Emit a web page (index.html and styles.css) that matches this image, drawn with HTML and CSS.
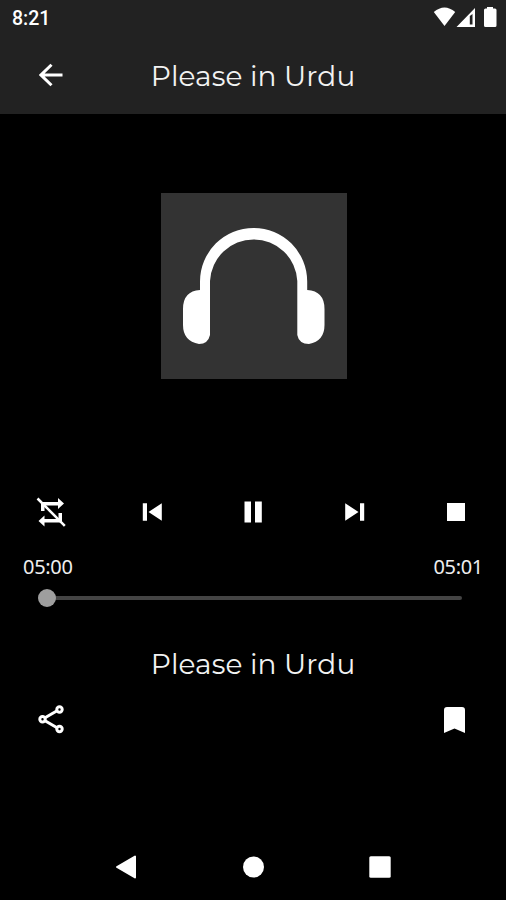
FILE: index.html
```html
<!DOCTYPE html>
<html lang="en">
  <head>
    <meta charset="utf-8">
    <title>Please in Urdu</title>
    <link rel="stylesheet" href="styles.css">
  </head>

  <body>
    <header>
      <div class="status">
        <span class="clock">8:21</span>
        <svg class="statusIcons" width="64" height="22" viewBox="0 0 64 22">
          <path d="M0.800 6 Q11.500 -3 22.200 6 L11.500 20 Z"/>
          <path fill-rule="evenodd" d="M42 2 V21 H23.500 Z M36.800 10 V18.500 H39.500 V8 Z"/>
          <path d="M54 1 H60 V2.500 H62 Q63.500 2.500 63.500 4 V19.500 Q63.500 21 62 21 H52.500 Q51 21 51 19.500 V4 Q51 2.500 52.500 2.500 H54 Z"/>
        </svg>
      </div>
      <div class="titleBar">
        <svg class="back" width="24" height="24" viewBox="0 0 24 24">
          <path d="M23.500 12 H2 M12.500 1.700 L2 12 L12.500 22.300"/>
        </svg>
        <h1>Please in Urdu</h1>
      </div>
    </header>

    <main>
      <div class="cover">
        <svg width="186" height="186" viewBox="0 0 186 186">
          <path d="M39 97 V88.500 A53.600 53.600 0 0 1 146.200 88.500 V97 Q163.500 98 163.500 116 V132 Q163.500 148 148 151 Q138 151 136.300 142 V88 A43.700 43.700 0 0 0 49 88 V142 Q47 151 38 151 Q22 148 22 132 V116 Q22 98 39 97 Z"/>
        </svg>
      </div>

      <div class="controls">
        <svg width="30" height="30" viewBox="0 0 30 30">
          <path d="M5 5 H22 V1 L28 6.500 L22 12 V8.500 H8.500 V14 H5 Z"/>
          <path d="M26 16 V25.500 H8.500 V29.500 L2.500 24 L8.500 18.500 V22 H22.500 V16 Z"/>
          <path class="slash" d="M1.500 1.500 L28.800 28.800"/>
        </svg>
        <svg width="20" height="20" viewBox="0 0 20 20">
          <path d="M0.800 1.200 H5 V18.800 H0.800 Z M19.800 1.200 V18.800 L6.500 10 Z"/>
        </svg>
        <svg width="18" height="22" viewBox="0 0 18 22">
          <path d="M0.500 0.500 H7 V21.500 H0.500 Z M11 0.500 H17.800 V21.500 H11 Z"/>
        </svg>
        <svg width="20" height="20" viewBox="0 0 20 20">
          <path d="M0.200 1.200 V18.800 L13.500 10 Z M15 1.200 H19.200 V18.800 H15 Z"/>
        </svg>
        <svg width="18" height="18" viewBox="0 0 18 18">
          <path d="M0 0 H18 V18 H0 Z"/>
        </svg>
      </div>

      <div class="times">
        <span>05:00</span>
        <span>05:01</span>
      </div>
      <div class="seek">
        <div class="thumb"></div>
      </div>

      <h2>Please in Urdu</h2>

      <div class="actions">
        <svg class="share" width="28" height="30" viewBox="0 0 28 30">
          <path d="M22.200 5.500 L5.500 15.200 L22.200 25"/>
          <circle cx="22.500" cy="5.500" r="2.700"/>
          <circle cx="5.500" cy="15.200" r="2.700"/>
          <circle cx="22.500" cy="25" r="2.700"/>
        </svg>
        <svg width="21" height="27" viewBox="0 0 21 27">
          <path d="M0 27 V4 Q0 1 3 1 H18 Q21 1 21 4 V27 L10.500 22.500 Z"/>
        </svg>
      </div>
    </main>

    <nav>
      <svg width="22" height="24" viewBox="0 0 22 24">
        <path class="rounded" d="M20 1.500 V22.500 L2 12 Z"/>
      </svg>
      <svg width="22" height="22" viewBox="0 0 22 22">
        <circle cx="11.500" cy="11" r="10.500"/>
      </svg>
      <svg width="22" height="22" viewBox="0 0 22 22">
        <rect x="0.300" y="0.300" width="21.400" height="21.400" rx="1.500"/>
      </svg>
    </nav>
  </body>
</html>
```

FILE: styles.css
```css
* {
  box-sizing: border-box;
}

body {
  display: flex;
  flex-direction: column;
  height: 900px;
  margin: 0;
  background-color: #000;
  color: #fff;
  font-family: "Noto Sans", sans-serif;
}

svg {
  display: block;
  fill: #fff;
}

header {
  height: 114px;
  background-color: #222;
}

.status {
  display: flex;
  justify-content: space-between;
  align-items: center;
  height: 36px;
  padding: 0 9px 0 12px;
}

.clock {
  font-family: Roboto, sans-serif;
  font-size: 19.5px;
  font-weight: 500;
}

.statusIcons {
  margin-bottom: 3px;
}

.titleBar {
  display: grid;
  grid-template-columns: 101px 1fr 101px;
  align-items: center;
  height: 78px;
}

.back {
  justify-self: center;
  fill: none;
  stroke: #fff;
  stroke-width: 3;
}

h1,
h2 {
  margin: 0;
  color: #f2f2f2;
  font-family: Montserrat, Inter, sans-serif;
  font-size: 28px;
  font-weight: 400;
  line-height: 36px;
  letter-spacing: 0.1px;
  text-align: center;
}

h1 {
  padding-top: 2px;
}

main {
  flex: 1;
}

.cover {
  width: 186px;
  height: 186px;
  margin: 79px auto 0 161px;
  background-color: #333;
}

.controls {
  display: grid;
  grid-template-columns: repeat(5, 1fr);
  justify-items: center;
  align-items: center;
  width: 507px;
  height: 40px;
  margin-top: 113px;
}

.slash {
  stroke: #fff;
  stroke-width: 2.5;
}

.times {
  display: flex;
  justify-content: space-between;
  padding: 0 23px;
  margin-top: 21px;
  color: #eee;
  font-size: 20px;
  line-height: 28px;
  letter-spacing: -0.3px;
}

.seek {
  display: flex;
  align-items: center;
  height: 4px;
  margin: 15px 44px 0 47px;
  border-radius: 2px;
  background-color: #444;
}

.thumb {
  width: 18px;
  height: 18px;
  margin-left: -9px;
  border-radius: 50%;
  background-color: #9e9e9e;
}

h2 {
  margin-top: 46px;
}

.actions {
  display: flex;
  justify-content: space-between;
  align-items: center;
  padding: 0 41px 0 37px;
  margin-top: 22px;
}

.share {
  fill: none;
  stroke: #fff;
  stroke-width: 3;
}

.share circle {
  fill: #000;
}

nav {
  display: grid;
  grid-template-columns: repeat(3, 127px);
  justify-content: center;
  justify-items: center;
  align-items: center;
  height: 66px;
}

.rounded {
  stroke: #fff;
  stroke-width: 2;
  stroke-linejoin: round;
}
```
